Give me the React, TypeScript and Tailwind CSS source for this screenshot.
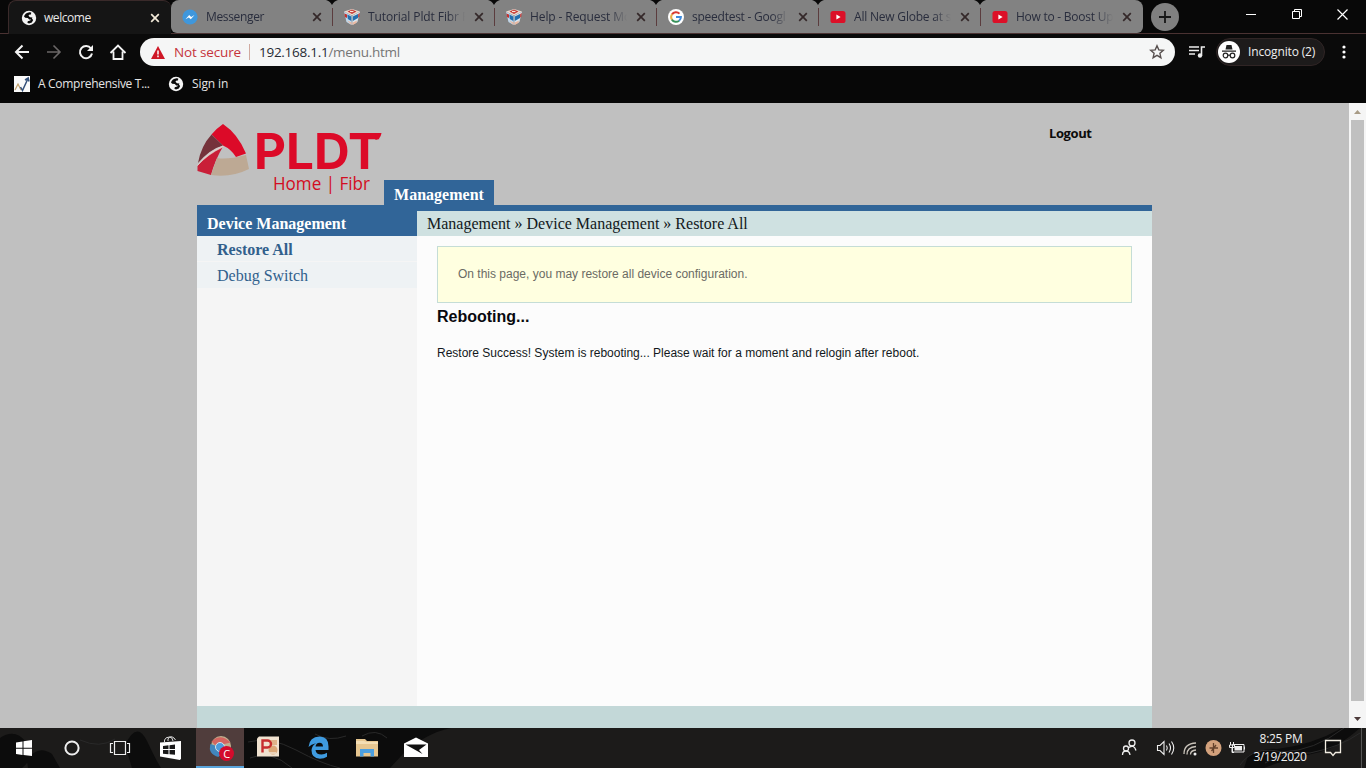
import React from 'react';

const GlobeIcon = ({ size = 16 }: { size?: number }) => (
  <svg width={size} height={size} viewBox="0 0 16 16" className="shrink-0">
    <circle cx="8" cy="8" r="7.2" fill="#f4f4f4" />
    <path d="M8.6 2.2C6 2.4 3.4 4 3 6.6l1.2 1.2 2.6.2 1.4 1.4 2.6-.2.6-1.6-2.4-.4-1.6-1.4 1.2-1.2 1.4-.2.2-1.8zM10.8 8.4l-1.6 2.2-2.4.6-.4 1.6 1.6.8 2.8-1.2 1.4-2.4z" fill="#0a0a0a" />
  </svg>
);

const MessengerIcon = () => (
  <svg width="16" height="16" viewBox="0 0 16 16" className="shrink-0">
    <circle cx="8" cy="8" r="7.6" fill="#3f97dc" />
    <path d="M3.5 10.3l3.7-4.2 2 1.8 3.3-1.8-3.7 4.2-2-1.8z" fill="#fff" />
  </svg>
);

const CubeIcon = () => (
  <svg width="16" height="16" viewBox="0 0 16 16" className="shrink-0">
    <path d="M0 2.500L7.600 6.800V16L2.500 13z" fill="#bfd9ee" />
    <path d="M16 2.500L8.400 6.800V16l5-3z" fill="#d9e6f0" />
    <path d="M0 2.500L8 0l8 2.500-8 4z" fill="#ead9cf" />
    <path d="M3.500 2.500L8 .500l4.500 2L8 5z" fill="#c63a35" />
    <path d="M6 2.500h3.500" stroke="#f4e4da" strokeWidth="1.200" />
    <path d="M.500 4.500l2.500 1v3.500L1 8z" fill="#c4322f" />
    <path d="M3.300 5.600l4 2V12L3.800 10zM8.800 7.600L14 5v4l-5.200 3z" fill="#246eae" />
    <path d="M14.200 5l1.500-1-.500 4-1 .500z" fill="#c4322f" />
    <path d="M3 11.500l4.600 2V16zM8.600 13.500l4.600-2-1 2.500L8.600 16z" fill="#ebb8a0" />
  </svg>
);

const GoogleIcon = () => (
  <svg width="16" height="16" viewBox="0 0 16 16" className="shrink-0">
    <circle cx="8" cy="8" r="8" fill="#fff" />
    <g fill="none" strokeWidth="2">
      <path d="M11.5 4.6A4.9 4.9 0 0 0 4 5.4" stroke="#d93a32" />
      <path d="M4 5.2a5 5 0 0 0 0 5.5" stroke="#e7b04b" />
      <path d="M3.9 10.6a4.9 4.9 0 0 0 7.2 1.1" stroke="#38915a" />
      <path d="M8 8.1h4.9a4.9 4.9 0 0 1-1.8 3.7" stroke="#3f8bdc" />
    </g>
  </svg>
);

const YoutubeIcon = () => (
  <svg width="16" height="16" viewBox="0 0 16 16" className="shrink-0">
    <rect x="0.5" y="2" width="15" height="12" rx="2.6" fill="#dc1028" />
    <path d="M6.4 5.6l4.2 2.4-4.2 2.4z" fill="#fff" />
  </svg>
);

const CloseIcon = ({ color }: { color: string }) => (
  <svg width="10" height="10" viewBox="0 0 10 10" className="shrink-0">
    <path d="M1.2 1.2l7.6 7.6M8.8 1.2L1.2 8.8" stroke={color} strokeWidth="1.7" />
  </svg>
);

const tabs = [
  { title: 'Messenger', icon: <MessengerIcon />, tracking: 'tracking-[-0.35px]' },
  { title: 'Tutorial Pldt Fibr R', icon: <CubeIcon />, tracking: 'tracking-[-0.1px]' },
  { title: 'Help - Request Mo', icon: <CubeIcon />, tracking: 'tracking-[-0.1px]' },
  { title: 'speedtest - Googl', icon: <GoogleIcon />, tracking: 'tracking-[-0.25px]' },
  { title: 'All New Globe at s', icon: <YoutubeIcon />, tracking: 'tracking-[-0.2px]' },
  { title: 'How to - Boost Up', icon: <YoutubeIcon />, tracking: 'tracking-[-0.25px]' },
];

const TabStrip = () => (
  <div className="flex h-[34px] border-b border-[#4a3232] bg-[#080808]">
    <div className="ml-2 flex h-[34px] w-[163px] shrink-0 items-center rounded-t-lg border-t border-l border-[#3a2a2a] bg-[#151515] pl-3">
      <GlobeIcon />
      <span className="ml-[7px] w-[106px] text-xs tracking-[-0.45px] text-[#e8e8e8]">welcome</span>
      <CloseIcon color="#f2e9d8" />
    </div>
    <div className="flex h-[33px] w-[972px] shrink-0 overflow-hidden rounded-t-lg rounded-b-md bg-[#828282]">
      {tabs.map((tab, i) => (
        <div key={i} className="relative flex h-[33px] w-[162px] shrink-0 items-center pl-[11px]">
          {i > 0 && <span className="absolute top-2 left-[-1px] h-[18px] w-px bg-[#5b3c3e]" />}
          {i > 0 && (
            <svg width="12" height="5" className="absolute top-0 left-[-7px]">
              <path d="M0 0h12q-4 1-6 5Q4 1 0 0z" fill="#080808" />
            </svg>
          )}
          {tab.icon}
          <span className={`ml-2 w-[97px] overflow-hidden text-xs whitespace-nowrap text-[#292d3d] [mask-image:linear-gradient(90deg,#000_82%,transparent)] ${tab.tracking}`}>
            {tab.title}
          </span>
          <span className="ml-[9px] flex">
            <CloseIcon color="#342829" />
          </span>
        </div>
      ))}
    </div>
    <div className="mt-[3px] ml-2 flex h-7 w-7 items-center justify-center rounded-full bg-[#808080]">
      <svg width="12" height="12">
        <path d="M6 0v12M0 6h12" stroke="#161616" strokeWidth="1.8" />
      </svg>
    </div>
    <svg width="132" height="30" className="ml-auto" fill="none" stroke="#fff" strokeWidth="1">
      <path d="M12 14.500h10" />
      <path d="M58.500 11.500h7v7h-7zM60.500 11V9.500h7v7H66" />
      <path d="M103.500 9.500l10 10M113.500 9.500l-10 10" strokeWidth="1.200" />
    </svg>
  </div>
);

const Toolbar = () => (
  <div className="flex h-[36px] items-center bg-[#0a0a0a]">
    <svg width="140" height="36" fill="none" stroke="#f3f3f3" strokeWidth="2">
      <path d="M29 18H16M22.500 11.500L16 18l6.500 6.500" />
      <path d="M47 18h13M53.500 11.500L60 18l-6.500 6.500" stroke="#6b6767" strokeWidth="1.6" />
      <path d="M91 14.500A6.100 6.100 0 1 0 92 19.500" />
      <path d="M93 11v6h-6z" fill="#f3f3f3" stroke="none" />
      <path d="M110.500 19l7.500-7.500 7.500 7.500M113.500 17.500V25h9v-7.500" strokeWidth="1.8" />
    </svg>
    <div className="flex h-7 w-[1035px] items-center rounded-full bg-[#f5f6f6] pr-[10px] pl-[11px]">
      <svg width="14" height="13" viewBox="0 0 14 13">
        <path d="M7 0l7 13H0z" fill="#cf1726" />
        <path d="M7 4.500v4M7 9.500v1.800" stroke="#fff" strokeWidth="1.500" />
      </svg>
      <span className="ml-[9px] w-[75px] text-[13.500px] tracking-[-0.15px] text-[#c5343c]">Not secure</span>
      <span className="h-4 w-px bg-[#d0aaa0]" />
      <span className="ml-[9px] text-[13.500px] tracking-[-0.27px] text-[#262a33]">
        192.168.1.1<span className="text-[#757575]">/menu.html</span>
      </span>
      <svg width="16" height="16" viewBox="0 0 16 16" className="ml-auto">
        <path d="M8 1.800l1.800 4.100 4.500.4-3.400 3 1 4.400L8 11.400l-3.900 2.300 1-4.400-3.400-3 4.500-.4z" fill="none" stroke="#58504f" strokeWidth="1.400" />
      </svg>
    </div>
    <svg width="18" height="16" viewBox="0 0 18 16" className="ml-[13px] shrink-0">
      <path d="M1 3h10M1 6.500h10M1 10h6" stroke="#eee" strokeWidth="1.600" />
      <path d="M13.500 11.500V3H17" stroke="#eee" strokeWidth="1.600" fill="none" />
      <circle cx="12" cy="11.500" r="2.200" fill="#eee" />
    </svg>
    <div className="ml-[10px] flex h-7 w-[109px] shrink-0 items-center rounded-full border border-[#302525] bg-[#1d1b1b] pl-px">
      <svg width="22" height="22" viewBox="0 0 22 22" className="shrink-0">
        <circle cx="11" cy="11" r="11" fill="#fff" />
        <path d="M7.500 8.500l1-4.500h5l1 4.500zM4 9.500h14v1.200H4z" fill="#222" />
        <g fill="none" stroke="#222" strokeWidth="1.200">
          <circle cx="7.500" cy="14.500" r="2.300" />
          <circle cx="14.500" cy="14.500" r="2.300" />
          <path d="M9.800 14.200h2.400" />
        </g>
      </svg>
      <span className="ml-2 text-xs tracking-[-0.15px] whitespace-nowrap text-[#eee]">Incognito (2)</span>
    </div>
    <svg width="6" height="16" className="ml-[16px] shrink-0" fill="#fff">
      <circle cx="3" cy="3" r="1.600" />
      <circle cx="3" cy="8" r="1.600" />
      <circle cx="3" cy="13" r="1.600" />
    </svg>
  </div>
);

const Bookmarks = () => (
  <div className="flex h-[33px] items-start bg-[#070707] pt-1.5 pl-[14px] text-xs text-[#e4e4e4]">
    <svg width="16" height="16" className="shrink-0">
      <rect width="16" height="16" fill="#fafafa" />
      <path d="M1 14l3-6 3 6" fill="none" stroke="#c2a06a" strokeWidth="1.200" />
      <path d="M6.500 11l2 3.500 5.500-12M11 4l3.200-2 .8 3.500" fill="none" stroke="#334f78" strokeWidth="1.500" />
    </svg>
    <span className="ml-2 w-[130px] leading-4 tracking-[-0.3px]">A Comprehensive T...</span>
    <GlobeIcon />
    <span className="ml-2 leading-4 tracking-[-0.1px]">Sign in</span>
  </div>
);

const PldtLogo = () => (
  <svg width="190" height="75" viewBox="0 0 190 75" className="block">
    <path d="M14.500 10.500Q20 4 26 0q15 10 23 29.500L39 33Q34 25 26 21.500z" fill="#dc0a28" />
    <path d="M14.500 10.500L26 21.500Q13 25 1 39 4 22 14.500 10.500z" fill="#75323b" />
    <path d="M26 22.500Q8 31 .500 42V47L14 51q4-15 12-28.500z" fill="#c91f38" />
    <path d="M26 22Q11 27 .500 41.500 11 30 26 23z" fill="#ded0cc" stroke="#ded0cc" strokeWidth="0.600" />
    <path d="M20 34q10 2 29-3l3 14q-18 9-38 6z" fill="#bda994" />
    <text x="57" y="45" textLength="127" lengthAdjust="spacingAndGlyphs" className="font-['Inter'] text-[49.5px] font-bold" fill="#dc0a28">PLDT</text>
    <path d="M178 9h6.500q-1 6-6 7z" fill="#dc0a28" />
    <text x="76" y="66" textLength="97" lengthAdjust="spacingAndGlyphs" className="font-['Open_Sans'] text-[18px]" fill="#d30d22">Home | Fibr</text>
  </svg>
);

const RouterPage = () => (
  <div className="flex min-w-0 flex-1 flex-col bg-[#c0c0c0] pl-[197px]">
    <div className="flex h-[102px] w-[955px] shrink-0 items-end">
      <div className="h-[81px] w-[187px] shrink-0">
        <PldtLogo />
      </div>
      <div className="flex h-[25px] w-[110px] items-center justify-center bg-[#316598] pt-[5px] font-['Liberation_Serif'] text-base font-bold text-white">
        Management
      </div>
      <span className="mb-[63px] ml-auto w-[103px] text-[13px] leading-[18px] font-bold tracking-[-0.4px] text-[#0c0c0c]">Logout</span>
    </div>
    <div className="h-1.5 w-[955px] shrink-0 bg-[#316598]" />
    <div className="flex min-h-0 w-[955px] flex-1">
      <aside className="w-[220px] bg-[#f5f5f5] font-['Liberation_Serif'] text-base leading-[26px] text-[#31608c]">
        <div className="h-[25px] bg-[#316598] pl-[10px] font-bold text-white">Device Management</div>
        <div className="mb-px h-[25px] bg-[#eef2f4] pt-px pl-5 font-bold">Restore All</div>
        <div className="h-[26px] bg-[#eef2f4] pt-px pl-5">Debug Switch</div>
      </aside>
      <main className="flex-1 bg-[#fcfcfc] font-['Liberation_Sans'] text-xs text-[#121820]">
        <div className="h-[25px] bg-[#cfe1e1] pl-[10px] font-['Liberation_Serif'] text-base leading-[26px]">
          Management » Device Management » Restore All
        </div>
        <div className="mx-5 mt-[10px] flex h-[57px] items-center border border-[#c5ddd6] bg-[#ffffe0] pb-0.5 pl-5 text-[#6b6b64]">
          On this page, you may restore all device configuration.
        </div>
        <h1 className="mt-1 pl-5 text-base leading-5 font-bold text-[#08090e]">Rebooting...</h1>
        <p className="mt-[18px] pl-5 leading-4">
          Restore Success! System is rebooting... Please wait for a moment and relogin after reboot.
        </p>
      </main>
    </div>
    <div className="h-[22px] w-[955px] shrink-0 bg-[#c3d8d8]" />
  </div>
);

const Scrollbar = () => (
  <div className="flex w-[17px] flex-col items-center bg-[#f5f5f5]">
    <svg width="17" height="17">
      <path d="M5 11l3.500-4 3.500 4z" fill="#a89b86" />
    </svg>
    <div className="w-[13px] flex-1 bg-[#c0c0c0]" />
    <svg width="17" height="27">
      <path d="M5 16h7l-3.500 4z" fill="#4c3a3a" />
    </svg>
  </div>
);

const WallpaperLines = () => (
  <svg width="1366" height="40" className="absolute inset-0">
    <g fill="#0c0c0c">
      <path d="M0 10q15-10 26 4t-4 26H0zM27 33q10-17 25-7l8 14H28zM125 17q12-25 22-4t14 27h-29zM244 0h207q-25 5-48 26l-13 14H244z" />
      <path d="M1248 28q18-9 29-7 35-4 65-21l19-1q-24 22-45 26-32 7-52 15h-20z" />
    </g>
    <g fill="none" stroke="#292929">
      <path d="M248 14q22-6 48 8t44 18M250 30q20-9 42 10M315 6q14 8 31 2M362 8q14-8 25 2" />
      <path d="M1240 37q14-20 42-13 32-1 62-24M1265 35q20-12 45-10 30-6 50-20M80 12q20 9 35-1" />
    </g>
  </svg>
);

const Taskbar = () => (
  <div className="relative h-10 bg-[#1c1b1a]">
    <WallpaperLines />
    <div className="relative flex h-10">
      <svg width="48" height="40" fill="#fff">
        <path d="M16 14.500l6.500-1v6.200H16zM23.500 13.300l8.500-1.300v7.700h-8.500zM16 20.700h6.500v6.200l-6.500-1zM23.500 20.700H32V28l-8.500-1z" />
      </svg>
      <svg width="48" height="40">
        <circle cx="24" cy="20" r="6.600" fill="none" stroke="#eee" strokeWidth="2" />
      </svg>
      <svg width="48" height="40" fill="none" stroke="#eee" strokeWidth="1.200">
        <path d="M18.500 13.500h11v13h-11zM17 15.500h-2.500v9H17M31 15.500h2.500v9H31" />
      </svg>
      <svg width="52" height="40">
        <path d="M16 14.500l21-1.500v17.500L36 32 16 28.500z" fill="#fff" />
        <path d="M20.500 14v-2q1-3 5-3 3 0 3.500 4M24 13v-2q2-4 6-1l1.500 2" fill="none" stroke="#ddd" />
        <path d="M19 18l5.500-.7V21H19zM25.500 17.200l5.500-.7V21h-5.500zM19 22h5.500v4.200l-5.500-.5zM25.500 22H31v4.800l-5.500-.5z" fill="#191919" />
      </svg>
      <div className="h-10 w-12 border-b-2 border-[#5aa5dc] bg-[#503d3c]">
        <svg width="48" height="38">
          <circle cx="25" cy="18" r="10" fill="#bfb08e" />
          <path d="M15.500 13.500q9-9 19 1l-8 2-6 2z" fill="#d46560" />
          <path d="M14.500 16q-3 10 8 13l4-7-6-4z" fill="#4186bd" />
          <circle cx="24" cy="19" r="4.500" fill="#4e9bdb" stroke="#d9e2e8" />
          <circle cx="30.500" cy="25.500" r="7.500" fill="#d30b2c" />
          <text x="27.200" y="29.500" fontSize="11" fill="#fff" className="font-['Open_Sans']">C</text>
        </svg>
      </div>
      <svg width="49" height="40">
        <path d="M15 8.500h20v20H13v-18z" fill="#f0e2d0" />
        <path d="M26 12h7v5h-7z" fill="#e0b38a" />
        <circle cx="29" cy="22" r="4.500" fill="#dba878" />
        <path d="M24 25h8" stroke="#f0e2d0" strokeWidth="1.500" />
        <path d="M18.500 24.500v-12h5a3.300 3.300 0 0 1 0 7h-5" fill="none" stroke="#c72e2f" strokeWidth="2.400" />
      </svg>
      <svg width="49" height="40">
        <path d="M15.500 19q1-10.500 11-10.500 9 0 9 10v3.500H22.500q.5 4.500 6 4.500 3 0 5.500-1.800v4q-3 2-7 2-8.500-.5-8.500-8.500.5-5 4.500-7-5 1-7.500 3.800zM22.500 18.500h7.500q0-3.800-3.500-3.800t-4 3.800z" fill="#3f9be0" />
      </svg>
      <svg width="49" height="40">
        <path d="M14 11h9l2 2h11v15.500H14z" fill="#e6c690" />
        <path d="M14 13h8l3 1h11v2H14z" fill="#f4deb4" />
        <path d="M18 21h14v7.500h-3.500V25h-7v3.500H18z" fill="#4b9fe0" />
      </svg>
      <svg width="48" height="40">
        <path d="M13 15.500L25 9.500l12 6v13.500H13z" fill="#fff" />
        <path d="M14.500 16.500h21L28 22l3.500 4-8-4.500z" fill="#111" />
      </svg>
      <svg width="134" height="40" className="ml-auto" fill="none" stroke="#eee" strokeWidth="1.300">
        <circle cx="21" cy="15" r="3" />
        <circle cx="15" cy="20.500" r="2.500" />
        <path d="M18 19.500q5-3.500 7 3M11.500 27q0-4 3.500-4t4 4" />
        <path d="M46.500 17.500H49l4-4v13l-4-4h-2.500zM55.500 17.500q1.500 2.500 0 5M58 15.500q3 4.500 0 9M60.500 13.500q4.500 6.500 0 13" strokeWidth="1.100" />
        <path d="M73 26q0-10.500 12-11M76 26.500q0-7.500 9-8M79.500 26.500q0-4 5.500-4.500" stroke="#c9c3ba" />
        <circle cx="84" cy="26" r="1.500" fill="#eee" stroke="none" />
        <circle cx="102.500" cy="20" r="8" fill="#d3a17c" stroke="none" />
        <path d="M102.500 15v10M98.500 20h8.500M100.500 23l4.500-6" stroke="#65422c" />
        <path d="M121.500 16.500h11.500v7.500h-11.500z" strokeWidth="1" />
        <path d="M123.500 18h7.500v4.500h-7.500zM133 18.500h1.500v3H133z" fill="#eee" stroke="none" />
        <path d="M119.500 14v3M122.500 14v3M118.500 17h5v2.500h-5zM121 20v4.500h2" strokeWidth="1" />
      </svg>
      <div className="w-[70px] pt-[2px] text-center text-xs leading-[18px] tracking-[-0.4px] whitespace-nowrap text-[#f0f0f0]">
        <div className="pl-0.5 tracking-[-0.3px]">8:25 PM</div>
        <div className="tracking-[-0.45px]">3/19/2020</div>
      </div>
      <svg width="51" height="40" fill="none" stroke="#f2ede2" strokeWidth="1.300">
        <path d="M10.500 12.500h15v12h-5l-2.500 3-2.500-3h-5z" />
        <path d="M46.500 0v40" stroke="#555" strokeWidth="1" />
      </svg>
    </div>
  </div>
);

const App: React.FC = () => (
  <div className="flex h-screen w-full flex-col overflow-hidden bg-black font-['Open_Sans',sans-serif]">
    <TabStrip />
    <Toolbar />
    <Bookmarks />
    <div className="flex min-h-0 flex-1">
      <RouterPage />
      <Scrollbar />
    </div>
    <Taskbar />
  </div>
);

export default App;
